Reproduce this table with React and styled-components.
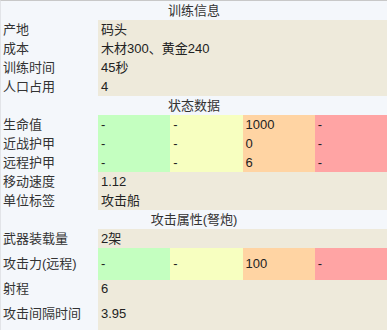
import React from 'react';
import styled, { createGlobalStyle } from 'styled-components';

const GlobalStyle = createGlobalStyle`
  html, body { margin: 0; padding: 0; background: #ffffff; }
  body {
    font-family: "Liberation Sans", "Noto Sans CJK SC", sans-serif;
    font-size: 13px;
    color: #222;
  }
`;

const tones = {
  green: '#c4ffc0',
  yellow: '#f7ffc0',
  orange: '#ffd4a3',
  red: '#ffa4a4',
};

const Table = styled.div`
  width: 387px;
  display: grid;
  grid-template-columns: 97px repeat(4, 1fr);
  border-top: 1px solid #c8c8c8;
  border-left: 1px solid #e2e4e8;
  box-sizing: border-box;
`;

const Header = styled.div`
  grid-column: 1 / -1;
  height: 19px;
  line-height: 19px;
  text-align: center;
  background: #f4f7fb;
  color: #333;
`;

const Label = styled.div`
  height: ${p => p.$h || 19}px;
  line-height: ${p => p.$h || 19}px;
  padding-left: 2px;
  background: #f4f7fb;
  color: #333;
  white-space: nowrap;
`;

const Value = styled.div`
  grid-column: 2 / -1;
  height: ${p => p.$h || 19}px;
  line-height: ${p => p.$h || 19}px;
  padding-left: 3px;
  background: #eeeadb;
  color: #222;
`;

const Stat = styled.div`
  height: ${p => p.$h || 19}px;
  line-height: ${p => p.$h || 19}px;
  padding-left: 3px;
  background: ${p => tones[p.$tone]};
  color: #222;
`;

const toneOrder = ['green', 'yellow', 'orange', 'red'];

const StatRow = ({ label, values, h }) => (
  <>
    <Label $h={h}>{label}</Label>
    {values.map((v, i) => (
      <Stat key={i} $tone={toneOrder[i]} $h={h}>{v}</Stat>
    ))}
  </>
);

const InfoRow = ({ label, value, h }) => (
  <>
    <Label $h={h}>{label}</Label>
    <Value $h={h}>{value}</Value>
  </>
);

export default function App() {
  return (
    <>
      <GlobalStyle />
      <Table>
        <Header>训练信息</Header>
        <InfoRow label="产地" value="码头" />
        <InfoRow label="成本" value="木材300、黄金240" />
        <InfoRow label="训练时间" value="45秒" />
        <InfoRow label="人口占用" value="4" />

        <Header>状态数据</Header>
        <StatRow label="生命值" values={['-', '-', '1000', '-']} />
        <StatRow label="近战护甲" values={['-', '-', '0', '-']} />
        <StatRow label="远程护甲" values={['-', '-', '6', '-']} />
        <InfoRow label="移动速度" value="1.12" />
        <InfoRow label="单位标签" value="攻击船" />

        <Header>攻击属性(弩炮)</Header>
        <InfoRow label="武器装载量" value="2架" />
        <StatRow label="攻击力(远程)" values={['-', '-', '100', '-']} h={32} />
        <InfoRow label="射程" value="6" h={18} />
        <InfoRow label="攻击间隔时间" value="3.95" h={32} />
      </Table>
    </>
  );
}
